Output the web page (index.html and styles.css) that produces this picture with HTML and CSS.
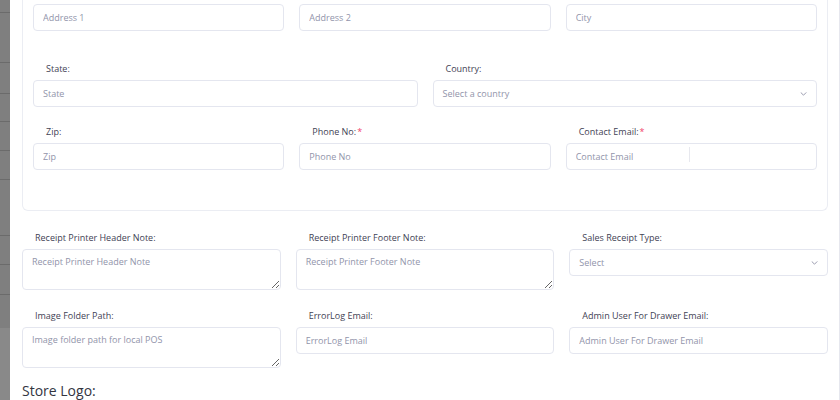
FILE: index.html
```html
<!DOCTYPE html>
<html lang="en">
<head>
<meta charset="utf-8">
<title>Store Settings</title>
<link rel="stylesheet" href="styles.css">
</head>
<body>
<div class="page">
  <aside class="rail">
    <div class="rail-item h13"></div>
    <div class="rail-item h50"></div>
    <div class="rail-item h31"></div>
    <div class="rail-item h28"></div>
    <div class="rail-item h29"></div>
    <div class="rail-item h29"></div>
    <div class="rail-item h56"></div>
    <div class="rail-item h29"></div>
    <div class="rail-item h30"></div>
    <div class="rail-item h33 plain"></div>
    <div class="rail-rest"></div>
  </aside>
  <main class="panel">
    <section class="card">
      <div class="grid3 first-row">
        <input class="field" type="text" placeholder="Address 1">
        <input class="field" type="text" placeholder="Address 2">
        <input class="field" type="text" placeholder="City">
      </div>
      <div class="grid2 card-row-a">
        <div class="group">
          <label class="label">State:</label>
          <input class="field" type="text" placeholder="State">
        </div>
        <div class="group">
          <label class="label">Country:</label>
          <div class="field select">
            <span class="select-text">Select a country</span>
            <svg class="chev" width="7" height="4" viewBox="0 0 7 4"><path d="M1 0.7l2.5 2.5 2.5-2.5" fill="none" stroke="#8e91a6" stroke-width="0.9" stroke-linecap="round" stroke-linejoin="round"/></svg>
          </div>
        </div>
      </div>
      <div class="grid3 card-row-b">
        <div class="group">
          <label class="label">Zip:</label>
          <input class="field" type="text" placeholder="Zip">
        </div>
        <div class="group">
          <label class="label">Phone No:<span class="req">*</span></label>
          <input class="field" type="text" placeholder="Phone No">
        </div>
        <div class="group">
          <label class="label">Contact Email:<span class="req">*</span></label>
          <div class="field-wrap">
            <input class="field" type="text" placeholder="Contact Email">
            <span class="ibeam"></span>
          </div>
        </div>
      </div>
    </section>

    <div class="grid3 sec-row-a">
      <div class="group">
        <label class="label">Receipt Printer Header Note:</label>
        <textarea class="field area" placeholder="Receipt Printer Header Note"></textarea>
      </div>
      <div class="group">
        <label class="label">Receipt Printer Footer Note:</label>
        <textarea class="field area" placeholder="Receipt Printer Footer Note"></textarea>
      </div>
      <div class="group">
        <label class="label">Sales Receipt Type:</label>
        <div class="field select">
          <span class="select-text">Select</span>
          <svg class="chev" width="7" height="4" viewBox="0 0 7 4"><path d="M1 0.7l2.5 2.5 2.5-2.5" fill="none" stroke="#8e91a6" stroke-width="0.9" stroke-linecap="round" stroke-linejoin="round"/></svg>
        </div>
      </div>
    </div>

    <div class="grid3 sec-row-b">
      <div class="group">
        <label class="label">Image Folder Path:</label>
        <textarea class="field area" placeholder="Image folder path for local POS"></textarea>
      </div>
      <div class="group">
        <label class="label">ErrorLog Email:</label>
        <input class="field" type="text" placeholder="ErrorLog Email">
      </div>
      <div class="group">
        <label class="label">Admin User For Drawer Email:</label>
        <input class="field" type="text" placeholder="Admin User For Drawer Email">
      </div>
    </div>

    <h3 class="logo-title">Store Logo:</h3>
  </main>
</div>
</body>
</html>
```

FILE: styles.css
```css
* { box-sizing: border-box; }

html, body {
  margin: 0;
  padding: 0;
  background: #ffffff;
  overflow: hidden;
}

body {
  font-family: "Open Sans", "Noto Sans", sans-serif;
  color: #3f4254;
}

.page {
  display: flex;
  width: 840px;
  height: 400px;
}

/* dimmed sidebar strip */
.rail {
  width: 10px;
  flex: 0 0 10px;
  display: flex;
  flex-direction: column;
  background: #7f7f7f;
}
.rail-item {
  border-bottom: 1px solid #6b6b6b;
  flex: 0 0 auto;
}
.rail-item.plain { border-bottom: none; }
.h13 { height: 13px; }
.h50 { height: 50px; }
.h31 { height: 31px; }
.h28 { height: 28px; }
.h29 { height: 29px; }
.h30 { height: 30px; }
.h33 { height: 33px; }
.h56 { height: 56px; }
.rail-rest {
  flex: 1;
  background: #898989;
}

/* main panel */
.panel {
  width: 830px;
  flex: 0 0 830px;
  padding: 0 11px 0 12px;
  border-right: 1px solid #e6e7ee;
}

.card {
  border: 1px solid #ebedf3;
  border-top: none;
  border-radius: 0 0 6px 6px;
  padding: 4px 10px 40px 10px;
}

.grid3 {
  display: grid;
  grid-template-columns: 1fr 1fr 1fr;
  column-gap: 15px;
}
.grid2 {
  display: grid;
  grid-template-columns: 1fr 1fr;
  column-gap: 15px;
}

.card-row-a { margin-top: 31px; }
.card-row-b { margin-top: 18px; }
.sec-row-a { margin-top: 20px; }
.sec-row-b { margin-top: 19px; }

.group {
  display: flex;
  flex-direction: column;
  min-width: 0;
}

.label {
  display: block;
  font-size: 9px;
  line-height: 14px;
  color: #3f4254;
  padding-left: 13px;
  margin-bottom: 4px;
}
.req {
  color: #f1416c;
  margin-left: 1px;
}

.field {
  display: block;
  width: 100%;
  height: 27px;
  margin: 0;
  border: 1px solid #e4e6ef;
  border-radius: 4px;
  background: #ffffff;
  padding: 0 9px;
  font-family: "Open Sans", "Noto Sans", sans-serif;
  font-size: 9px;
  color: #3f4254;
  outline: none;
}
.field::placeholder {
  color: #9194aa;
  opacity: 1;
}

.area {
  height: 41px;
  padding: 5px 9px;
  line-height: 14px;
  resize: vertical;
}

.select {
  display: flex;
  align-items: center;
  justify-content: space-between;
  padding-right: 9px;
}
.select-text {
  color: #9194aa;
  font-size: 9px;
  line-height: 14px;
}
.chev { display: block; }

.field-wrap {
  position: relative;
}
.ibeam {
  position: absolute;
  left: 123px;
  top: 4px;
  width: 1px;
  height: 15px;
  background: #e7e8ee;
}

.logo-title {
  margin: 14px 0 0 0;
  font-size: 14px;
  line-height: 18px;
  font-weight: 400;
  color: #33353f;
}
```
